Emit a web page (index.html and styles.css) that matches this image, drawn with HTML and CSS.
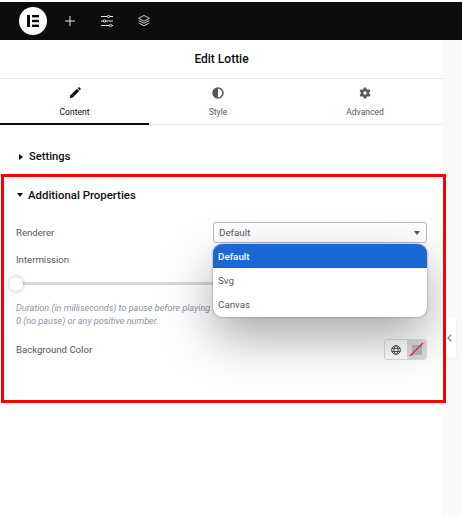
FILE: index.html

```html
<!DOCTYPE html>
<html lang="en">
<head>
    <meta charset="UTF-8">
    <meta name="viewport" content="width=device-width, initial-scale=1.0">
    <title>Edit Lottie</title>
    <link rel="stylesheet" href="styles.css">
</head>
<body>

    <!-- Top bar -->
    <div class="topbar">
        <div class="logo">
            <svg width="12" height="12" viewBox="0 0 12 12"><rect x="0" y="0" width="3" height="12" fill="#0c0d0e"/><rect x="5" y="0" width="7" height="2.4" fill="#0c0d0e"/><rect x="5" y="4.8" width="7" height="2.4" fill="#0c0d0e"/><rect x="5" y="9.6" width="7" height="2.4" fill="#0c0d0e"/></svg>
        </div>
        <svg class="icon-add" width="10" height="10" viewBox="0 0 10 10"><path d="M5 0V10M0 5H10" stroke="#e6e8ea" stroke-width="1" fill="none"/></svg>
        <svg class="icon-sliders" width="12" height="12" viewBox="0 0 12 12" fill="none" stroke="#e6e8ea" stroke-width="1"><path d="M0 1.500H6M9 1.500H12M0 6H2M5 6H12M0 10.500H8M11 10.500H12"/><circle cx="7.500" cy="1.500" r="1.200"/><circle cx="3.500" cy="6" r="1.200"/><circle cx="9.500" cy="10.500" r="1.200"/></svg>
        <svg width="12" height="12" viewBox="0 0 12 12" fill="none" stroke="#e6e8ea" stroke-width="0.9"><path d="M6 0.500L11.500 3.300L6 6.100L0.500 3.300Z"/><path d="M0.800 5.600L6 8.300L11.200 5.600"/><path d="M0.800 8L6 10.800L11.200 8"/></svg>
    </div>

    <div class="layout">
        <div class="panel">
            <div class="panel-title">Edit Lottie</div>

            <div class="tabs">
                <div class="tab active">
                    <svg width="12" height="12" viewBox="0 0 14 14"><path d="M1 13L1.700 9.600L9.200 2.100L11.900 4.800L4.400 12.300Z" fill="#0c0d0e"/><path d="M10 1.300L10.800 0.600C11.200 0.200 11.800 0.200 12.200 0.600L13.400 1.800C13.800 2.200 13.800 2.800 13.400 3.200L12.700 4Z" fill="#0c0d0e"/></svg>
                    <span>Content</span>
                </div>
                <div class="tab">
                    <svg width="12" height="12" viewBox="0 0 14 14"><circle cx="7" cy="7" r="5.800" fill="none" stroke="#515962" stroke-width="1.800"/><path d="M7 1.200A5.800 5.800 0 0 0 7 12.800Z" fill="#515962"/></svg>
                    <span>Style</span>
                </div>
                <div class="tab">
                    <svg width="12" height="12" viewBox="0 0 14 14"><path fill="#515962" fill-rule="evenodd" d="M5.700 0.500H8.300L8.700 2.400L10.200 3.200L12 2.700L13.300 5L11.900 6.200V7.800L13.300 9L12 11.300L10.200 10.800L8.700 11.600L8.300 13.500H5.700L5.300 11.600L3.800 10.800L2 11.300L0.700 9L2.100 7.800V6.200L0.700 5L2 2.700L3.800 3.200L5.300 2.400ZM7 5A2 2 0 1 0 7 9A2 2 0 1 0 7 5Z"/></svg>
                    <span>Advanced</span>
                </div>
            </div>

            <div class="section-head settings">
                <span class="caret-right"></span>
                <span>Settings</span>
            </div>

            <div class="highlight">
                <div class="section-head additional">
                    <span class="caret-down"></span>
                    <span>Additional Properties</span>
                </div>

                <div class="control-row renderer-row">
                    <label>Renderer</label>
                    <div class="select-wrap">
                        <div class="select-box">
                            <span>Default</span>
                            <span class="select-arrow"></span>
                        </div>
                        <div class="dropdown">
                            <div class="option selected">Default</div>
                            <div class="option">Svg</div>
                            <div class="option">Canvas</div>
                        </div>
                    </div>
                </div>

                <div class="control-row intermission-row">
                    <label>Intermission</label>
                </div>
                <div class="slider">
                    <div class="slider-track"></div>
                    <div class="slider-knob"></div>
                </div>
                <p class="hint">Duration (in milliseconds) to pause before playing<br>0 (no pause) or any positive number.</p>

                <div class="control-row color-row">
                    <label>Background Color</label>
                    <div class="color-group">
                        <div class="color-global">
                            <svg width="10" height="10" viewBox="0 0 11 11" fill="none" stroke="#3f444b" stroke-width="1"><circle cx="5.500" cy="5.500" r="4.800"/><ellipse cx="5.500" cy="5.500" rx="2.200" ry="4.800"/><path d="M0.800 3.800H10.200M0.800 7.200H10.200"/></svg>
                        </div>
                        <div class="color-swatch">
                            <div class="swatch-inner"></div>
                            <svg class="swatch-slash" width="15" height="15" viewBox="0 0 15 15"><path d="M1 14L14 1" stroke="#f0243a" stroke-width="1.200"/></svg>
                        </div>
                    </div>
                </div>
            </div>
        </div>

        <div class="side">
            <div class="collapse-tab">
                <svg width="5" height="8" viewBox="0 0 5 8"><path d="M4.300 0.700L1 4L4.300 7.300" fill="none" stroke="#6d7882" stroke-width="1.100"/></svg>
            </div>
        </div>
    </div>

</body>
</html>
```

FILE: styles.css

```css
* {
    box-sizing: border-box;
}

html,
body {
    height: 100%;
}

body {
    font-family: 'Roboto', 'Liberation Sans', sans-serif;
    margin: 0;
    padding: 2px 0 0;
    background-color: #fff;
    color: #515962;
    display: flex;
    flex-direction: column;
    overflow: hidden;
}

.topbar {
    height: 38px;
    flex-shrink: 0;
    background-color: #0c0d0e;
    display: flex;
    align-items: center;
    padding-left: 19px;
}

.logo {
    width: 28px;
    height: 28px;
    border-radius: 50%;
    background-color: #fff;
    display: flex;
    align-items: center;
    justify-content: center;
    margin-right: 18px;
}

.icon-add {
    margin-right: 26px;
}

.icon-sliders {
    margin-right: 25px;
}

.layout {
    flex: 1;
    display: flex;
}

.panel {
    width: 443px;
    flex-shrink: 0;
}

.side {
    position: relative;
    z-index: 7;
    flex: 1;
    background-color: #fafafa;
    padding-top: 278px;
}

.collapse-tab {
    width: 13px;
    height: 40px;
    background-color: #fff;
    box-shadow: 1px 1px 2px rgba(0, 0, 0, 0.05);
    display: flex;
    align-items: center;
    justify-content: center;
}

.panel-title {
    height: 39px;
    border-bottom: 1px solid #e6e8ea;
    font-size: 12px;
    font-weight: 500;
    color: #0c0d0e;
    text-align: center;
    line-height: 38px;
}

.tabs {
    display: grid;
    grid-template-columns: 149px 138px 156px;
    height: 46px;
    border-bottom: 1px solid #e6e8ea;
}

.tab {
    display: flex;
    flex-direction: column;
    align-items: center;
    font-size: 8.5px;
    padding-top: 8px;
    gap: 8px;
}

.tab.active {
    color: #0c0d0e;
    border-bottom: 2px solid #0c0d0e;
    height: 46px;
}

.section-head {
    display: flex;
    align-items: center;
    font-size: 11.2px;
    font-weight: 500;
    color: #0c0d0e;
    gap: 6px;
}

.section-head.settings {
    padding: 14px 0 0 19px;
    height: 49px;
}

.section-head.additional {
    font-size: 11.4px;
    gap: 5px;
    margin-left: 1px;
}

.caret-right {
    width: 0;
    height: 0;
    border-left: 4px solid #0c0d0e;
    border-top: 3.5px solid transparent;
    border-bottom: 3.5px solid transparent;
}

.caret-down {
    width: 0;
    height: 0;
    border-top: 4px solid #0c0d0e;
    border-left: 3.5px solid transparent;
    border-right: 3.5px solid transparent;
}

.highlight {
    position: relative;
    width: 445px;
    margin-left: 1px;
    height: 229px;
    padding: 14px 19px 0 15px;
}

/* red frame sits over the dropdown shadow */
.highlight::after {
    content: "";
    position: absolute;
    inset: 0;
    border: 3px solid #ff0000;
    pointer-events: none;
    z-index: 8;
}

.control-row {
    display: flex;
    align-items: center;
    justify-content: space-between;
    font-size: 9.6px;
}

.renderer-row {
    margin-top: 20px;
}

.select-wrap {
    position: relative;
    width: 214px;
    font-size: 9.8px;
}

.select-box {
    height: 21px;
    border: 1px solid #b9bdc2;
    border-radius: 3px;
    display: flex;
    align-items: center;
    justify-content: space-between;
    padding: 0 6px 0 5px;
    color: #515962;
}

.select-arrow {
    width: 0;
    height: 0;
    border-top: 4px solid #515962;
    border-left: 3.5px solid transparent;
    border-right: 3.5px solid transparent;
}

.dropdown {
    position: absolute;
    top: 22px;
    left: 0;
    width: 214px;
    height: 73px;
    background-color: #fff;
    border-radius: 9px;
    overflow: hidden;
    box-shadow: 0 20px 50px rgba(0, 0, 0, 0.35), 0 0 2px rgba(0, 0, 0, 0.5);
    z-index: 5;
}

.option {
    height: 24px;
    line-height: 25px;
    padding-left: 5px;
}

.option.selected {
    background-color: #1a68d4;
    color: #fff;
    font-weight: 500;
}

.intermission-row {
    margin-top: 10px;
    height: 12px;
}

.slider {
    position: relative;
    height: 16px;
    margin-top: 12px;
}

.slider-track {
    position: absolute;
    left: 0;
    top: 5px;
    width: 300px;
    height: 3px;
    background-color: #d5d8dc;
}

.slider-knob {
    position: absolute;
    left: -7px;
    top: 0;
    width: 14px;
    height: 14px;
    border-radius: 50%;
    background-color: #fff;
    box-shadow: 0 0 4px rgba(0, 0, 0, 0.3);
}

.hint {
    margin: 9px 0 0;
    font-size: 9.1px;
    font-style: italic;
    line-height: 12.5px;
    color: #8a93a0;
}

.color-row {
    margin-top: 12px;
}

.color-group {
    display: flex;
    width: 43px;
    height: 21px;
    border-radius: 3px;
    overflow: hidden;
    border: 1px solid #dcdfe2;
}

.color-global {
    width: 22px;
    display: flex;
    align-items: center;
    justify-content: center;
    background-color: #fff;
}

.color-swatch {
    position: relative;
    flex: 1;
    background-color: #d8dadd;
    display: flex;
    align-items: center;
    justify-content: center;
}

.swatch-inner {
    width: 10px;
    height: 10px;
    background-color: #b4b6b9;
}

.swatch-slash {
    position: absolute;
    left: 2px;
    top: 2px;
}
```
